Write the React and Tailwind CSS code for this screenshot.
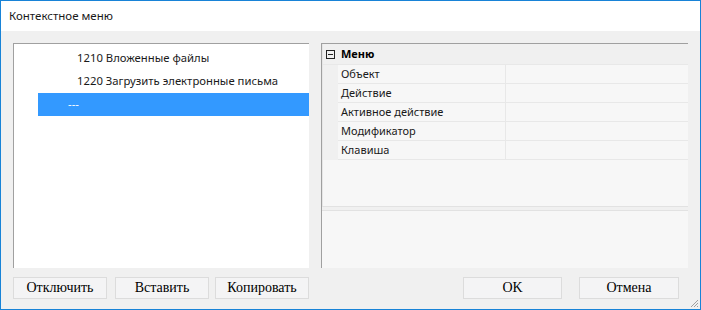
import React from 'react';

const ui = { fontFamily: '"Noto Sans", "Open Sans", sans-serif' };
const serif = { fontFamily: '"Liberation Serif", "Times New Roman", serif' };

const props = ['Объект', 'Действие', 'Активное действие', 'Модификатор', 'Клавиша'];

function Btn({ children, w }) {
  return (
    <button
      className={`h-[22px] ${w} bg-[#f4f4f5] border border-[#dcdcdc] text-[14px] text-black leading-none`}
      style={serif}
    >
      {children}
    </button>
  );
}

export default function App() {
  return (
    <div className="w-[701px] h-[310px] border border-[#1883d7] bg-[#f0f0f0] flex flex-col" style={ui}>
      {/* title bar */}
      <div className="h-[30px] bg-white flex items-center pl-[8px] text-[11.5px] text-[#1a1a1a]">
        Контекстное меню
      </div>

      <div className="flex gap-[12px] pt-[12px] pl-[12px] pr-[11px]">
        {/* tree */}
        <div className="w-[296px] h-[225px] bg-white border-t border-l border-[#a0a0a0] pt-[3px] text-[11.3px]">
          <div className="h-[23px] flex items-center pl-[63px] text-[#1a1a1a]">1210 Вложенные файлы</div>
          <div className="h-[23px] flex items-center pl-[63px] text-[#1a1a1a]">1220 Загрузить электронные письма</div>
          <div className="h-[23px] ml-[24px] bg-[#3399ff] flex items-center pl-[30px] text-white">---</div>
        </div>

        {/* property grid */}
        <div className="w-[367px] h-[225px] border-t border-l border-[#a0a0a0] flex flex-col text-[11px]">
          <div className="h-[162px] bg-[#f7f7f7] border-l border-[#e6e6e6] flex flex-col">
            <div className="h-[21px] bg-[#f0f0f0] flex items-center border-b border-[#e8e8e8]">
              <div className="w-[15px] flex justify-center">
                <svg width="9" height="9" viewBox="0 0 9 9">
                  <rect x="0.5" y="0.5" width="8" height="8" fill="none" stroke="#222" />
                  <path d="M2 4.5h5" stroke="#222" />
                </svg>
              </div>
              <span className="pl-[3px] font-bold text-black">Меню</span>
            </div>
            {props.map(p => (
              <div key={p} className="h-[19px] flex">
                <div className="w-[15px] bg-[#f0f0f0]" />
                <div className="w-[168px] flex items-center pl-[3px] text-[#1a1a1a] border-b border-r border-[#e8e8e8]">{p}</div>
                <div className="flex-1 border-b border-[#e8e8e8]" />
              </div>
            ))}
          </div>
          <div className="h-[4px] border-t border-[#e2e2e2]" />
          <div className="flex-1 bg-[#f7f7f7] border-t border-[#e2e2e2]" />
        </div>
      </div>

      {/* buttons */}
      <div className="flex pt-[9px] pl-[12px] pr-[21px]">
        <div className="flex">
          <Btn w="w-[94px]">Отключить</Btn>
          <div className="w-[8px]" />
          <Btn w="w-[94px]">Вставить</Btn>
          <div className="w-[6px]" />
          <Btn w="w-[94px]">Копировать</Btn>
        </div>
        <div className="flex-1" />
        <div className="flex gap-[17px]">
          <Btn w="w-[99px]">OK</Btn>
          <Btn w="w-[100px]">Отмена</Btn>
        </div>
      </div>
      <div className="flex-1 relative">
        <svg className="absolute right-[1px] bottom-[1px]" width="10" height="10" viewBox="0 0 10 10">
          <path d="M9 2L2 9M9 5L5 9M9 8L8 9" stroke="#a0a0a0" />
        </svg>
      </div>
    </div>
  );
}
